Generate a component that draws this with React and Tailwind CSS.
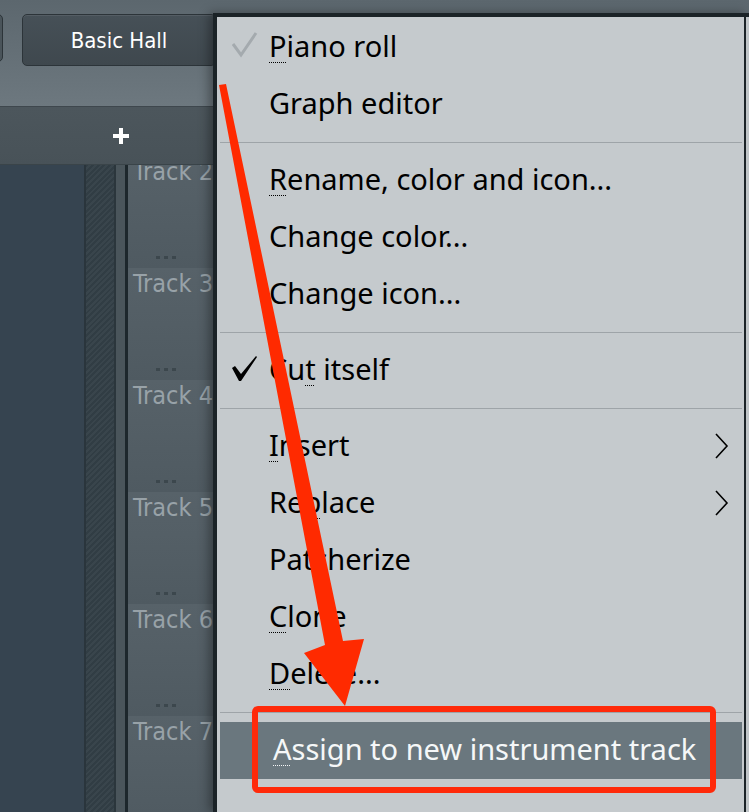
import React from "react";

function Check({ grey }) {
  if (grey) {
    return (
      <svg width="26" height="28" viewBox="0 0 26 28" className="block">
        <path d="M1 12 L9 23 L24 1" fill="none" stroke="#a4aaae" strokeWidth="3" strokeLinejoin="miter" />
      </svg>
    );
  }
  return (
    <svg width="26" height="28" viewBox="0 0 26 28" className="block">
      <path d="M0 13 L3 11 L9 19 L24 1 L25 2 L9 26 L7 26 Z" fill="#000" />
    </svg>
  );
}

function Chevron() {
  return (
    <svg width="14" height="26" viewBox="0 0 14 26" className="block">
      <path d="M1 1 L12 13 L1 25" fill="none" stroke="#000" strokeWidth="1.6" />
    </svg>
  );
}

function Item({ pre = "", u = "", post = "", check, sub, hl }) {
  return (
    <div
      className={
        "h-[57px] flex items-center " +
        (hl ? "bg-[#6a777e] text-[#f5f7f8]" : "text-black")
      }
    >
      <div className={hl ? "w-[53px] shrink-0" : "w-[49px] shrink-0 pl-[12px] pb-[4px]"}>
        {check === "grey" && <Check grey />}
        {check === "black" && <Check />}
      </div>
      <div className="flex-1 whitespace-nowrap text-[29px] leading-[40px] pb-[4px]">
        {pre}
        {u && (
          <span className="underline decoration-dotted decoration-1 underline-offset-[5px]">{u}</span>
        )}
        {post}
      </div>
      {sub && (
        <div className="pr-[13px] pb-[2px]">
          <Chevron />
        </div>
      )}
    </div>
  );
}

function Sep() {
  return (
    <div className="h-[19px] flex items-center">
      <div className="h-px w-full bg-[#9ea4a8]" />
    </div>
  );
}

function TrackRow({ n }) {
  return (
    <div className="h-[112px] flex flex-col justify-between bg-gradient-to-b from-[#576269] to-[#4f5a61]">
      <div className="pl-[5px] pt-[2px] text-[25px] leading-[28px] text-[#98a2a8] whitespace-nowrap">
        Track {n}
      </div>
      <div className="flex gap-[4px] pl-[28px] pb-[9px]">
        <div className="w-[4px] h-[3px] bg-[#3c474d]" />
        <div className="w-[4px] h-[3px] bg-[#3c474d]" />
        <div className="w-[4px] h-[3px] bg-[#3c474d]" />
      </div>
    </div>
  );
}

export default function App() {
  const tracks = [2, 3, 4, 5, 6, 7, 8];
  return (
    <div className="relative w-[749px] h-[812px] overflow-hidden bg-[#364450] font-['DejaVu_Sans_Condensed','DejaVu_Sans',sans-serif]">
      {/* background app */}
      <div className="flex flex-col h-full">
        <div className="h-[106px] shrink-0 bg-gradient-to-b from-[#5c676e] to-[#6d787f] flex items-start pt-[14px]">
          <div className="w-[12px] h-[48px] ml-[-9px] rounded-[5px] border border-[#2c3439] bg-[#4a545a]" />
          <div className="w-[194px] h-[52px] ml-[19px] rounded-[5px] border border-[#2c3439] bg-gradient-to-b from-[#465057] to-[#3f484e] flex items-center justify-center text-white text-[22px] shadow-[inset_0_1px_0_rgba(255,255,255,0.08)]">
            Basic Hall
          </div>
        </div>
        <div className="h-[59px] shrink-0 border-t border-[#3e474d] border-b border-b-[#3a4449] bg-gradient-to-b from-[#4c565c] to-[#485258] flex items-center">
          <div className="w-[242px] flex justify-center">
            <svg width="16" height="16" viewBox="0 0 16 16" className="block">
              <rect x="6" y="0" width="4" height="16" fill="#fff" />
              <rect x="0" y="6" width="16" height="4" fill="#fff" />
            </svg>
          </div>
        </div>
        <div className="flex-1 flex min-h-0">
          <div className="w-[84px] bg-[#364450]" />
          <div className="w-[2px] bg-[#2a353c]" />
          <div className="w-[28px] bg-[repeating-linear-gradient(135deg,#313d44_0px,#313d44_2px,#39454c_2px,#39454c_4px)]" />
          <div className="w-[2px] bg-[#2b363c]" />
          <div className="w-[9px] bg-[#4a555b]" />
          <div className="w-[3px] bg-[#1d272c]" />
          <div className="flex-1 overflow-hidden">
            <div className="mt-[-9px]">
              {tracks.map((n) => (
                <TrackRow key={n} n={n} />
              ))}
            </div>
          </div>
        </div>
      </div>

      {/* context menu */}
      <div className="absolute left-[213px] top-[13px] w-[536px] bottom-0 flex bg-[#c5cacd] border-t-4 border-l-4 border-[#1b2327] shadow-[-4px_0_10px_rgba(0,0,0,0.35)] font-['Noto_Sans',sans-serif]">
        <div className="flex-1 pl-[3px] pr-[2px] pt-[2px]">
          <Item check="grey" u="P" post="iano roll" />
          <Item pre="Graph editor" />
          <Sep />
          <Item u="R" post="ename, color and icon..." />
          <Item pre="Change color..." />
          <Item pre="Change icon..." />
          <Sep />
          <Item check="black" pre="Cu" u="t" post=" itself" />
          <Sep />
          <Item u="I" post="nsert" sub />
          <Item pre="Re" u="p" post="lace" sub />
          <Item pre="Patcherize" />
          <Item u="C" post="lone" />
          <Item u="D" post="elete..." />
          <Sep />
          <Item hl u="A" post="ssign to new instrument track" />
        </div>
        <div className="w-[2px] bg-[#1b2327]" />
        <div className="w-[3px] bg-[#c0c5c8]" />
      </div>

      {/* annotation overlay */}
      <svg className="absolute inset-0 pointer-events-none" width="749" height="812" viewBox="0 0 749 812">
        <polygon
          points="219,85 226,84 343,641 364,639 345,706 304,653 325,645"
          fill="#ff2a00"
        />
        <rect x="255" y="709" width="458" height="81" rx="3" fill="none" stroke="#ff2a0a" strokeWidth="6" />
      </svg>
    </div>
  );
}
